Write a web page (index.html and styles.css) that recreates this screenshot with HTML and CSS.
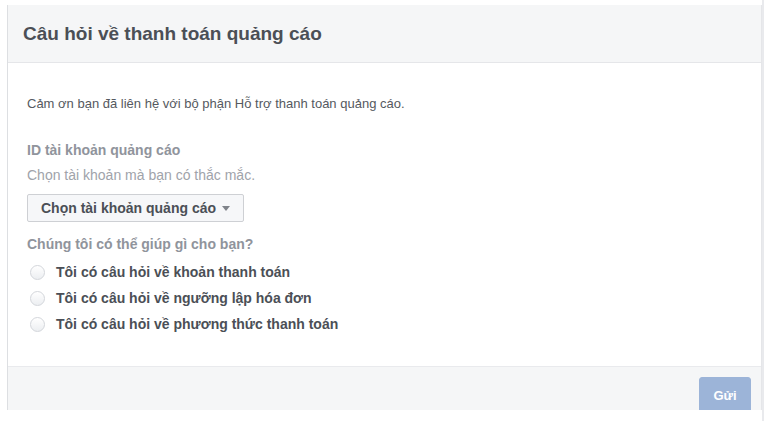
FILE: index.html
```html
<!DOCTYPE html>
<html>
<head>
    <title>Câu hỏi về thanh toán quảng cáo</title>
    <link rel="stylesheet" href="styles.css">
</head>
<body>
    <div id="page">
        <div class="panel">
            <div class="panel-header">
                <h2>Câu hỏi về thanh toán quảng cáo</h2>
            </div>

            <div class="panel-body">
                <p class="intro">Cảm ơn bạn đã liên hệ với bộ phận Hỗ trợ thanh toán quảng cáo.</p>

                <div class="label">ID tài khoản quảng cáo</div>
                <div class="hint">Chọn tài khoản mà bạn có thắc mắc.</div>
                <button type="button" class="select">Chọn tài khoản quảng cáo <span class="caret"></span></button>

                <div class="label question">Chúng tôi có thể giúp gì cho bạn?</div>
                <ul class="options">
                    <li><span class="radio"></span>Tôi có câu hỏi về khoản thanh toán</li>
                    <li><span class="radio"></span>Tôi có câu hỏi về ngưỡng lập hóa đơn</li>
                    <li><span class="radio"></span>Tôi có câu hỏi về phương thức thanh toán</li>
                </ul>
            </div>

            <div class="panel-footer">
                <button type="button" class="send">Gửi</button>
            </div>
        </div>
    </div>
</body>
</html>
```

FILE: styles.css
```css
body {
    font-family: "Liberation Sans", Arial, sans-serif;
    background-color: #fff;
    color: #4b4f56;
    margin: 0;
    padding: 0;
}

#page {
    width: 764px;
    height: 421px;
    border-right: 2px solid #e9eaed;
    box-sizing: border-box;
    padding: 5px 0 0 7px;
}

.panel {
    width: 755px;
    border-left: 1px solid #dddfe2;
    border-right: 1px solid #e5e6e9;
    box-sizing: border-box;
}

.panel-header {
    background-color: #f5f6f7;
    border-bottom: 1px solid #e5e6e9;
    height: 57px;
    padding: 0 15px;
    display: flex;
    align-items: center;
}

.panel-header h2 {
    margin: 0;
    font-size: 19px;
    font-weight: bold;
    color: #4b4f56;
}

.panel-body {
    padding: 33px 19px 29px;
}

.intro {
    margin: 0 0 29px;
    font-size: 13px;
    line-height: 16px;
    color: #555960;
}

.label {
    font-size: 14px;
    font-weight: bold;
    line-height: 18px;
    color: #90949c;
}

.hint {
    margin-top: 7px;
    font-size: 14px;
    line-height: 18px;
    color: #a0a3aa;
}

.select {
    margin-top: 10px;
    height: 28px;
    padding: 0 13px;
    background-color: #f6f7f9;
    border: 1px solid #ced0d4;
    border-radius: 2px;
    font-family: inherit;
    font-size: 14px;
    font-weight: bold;
    color: #4b4f56;
    display: flex;
    align-items: center;
}

.caret {
    margin-left: 6px;
    width: 0;
    height: 0;
    border-left: 4px solid transparent;
    border-right: 4px solid transparent;
    border-top: 5px solid #7f838a;
}

.question {
    margin-top: 13px;
}

.options {
    list-style: none;
    margin: 6px 0 0;
    padding: 0;
}

.options li {
    height: 26px;
    display: flex;
    align-items: center;
    font-size: 14px;
    font-weight: bold;
    color: #4b4f56;
}

.radio {
    width: 13px;
    height: 13px;
    margin: 0 11px 0 3px;
    border: 1px solid #d3d6db;
    border-radius: 50%;
    background: linear-gradient(#fff, #eceef1);
}

.panel-footer {
    background-color: #f5f6f7;
    border-top: 1px solid #e9eaed;
    height: 44px;
    box-sizing: border-box;
    padding: 10px 10px 0;
    display: flex;
    justify-content: flex-end;
    overflow: hidden;
}

.send {
    width: 52px;
    height: 36px;
    padding: 0;
    background-color: #9cb4d8;
    border: 1px solid #9cb4d8;
    border-radius: 3px;
    color: #fff;
    font-family: inherit;
    font-size: 13px;
    font-weight: bold;
    align-self: flex-start;
}
```
